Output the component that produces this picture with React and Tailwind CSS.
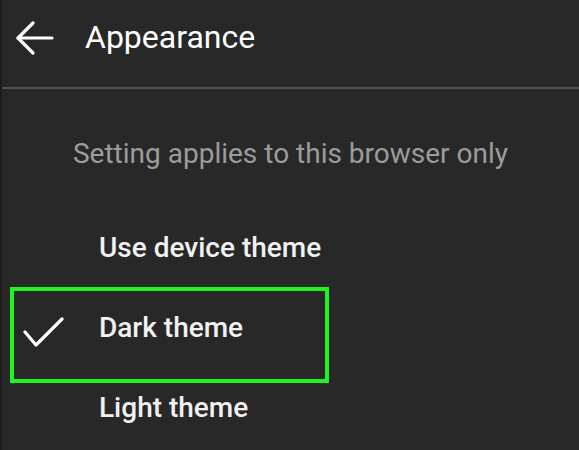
import React from "react";

function BackArrow() {
  return (
    <svg width="40" height="36" viewBox="0 0 40 36" fill="none" stroke="#ffffff" strokeWidth="3.2" strokeLinecap="round" strokeLinejoin="round">
      <path d="M3 18 H37" />
      <path d="M18 3 L3 18 L18 33" />
    </svg>
  );
}

function Check() {
  return (
    <svg width="42" height="32" viewBox="0 0 42 32" fill="none" stroke="#ffffff" strokeWidth="3.2" strokeLinecap="round" strokeLinejoin="round">
      <path d="M2 15 L13 28 L39 2" />
    </svg>
  );
}

export default function App() {
  const rows = [
    { label: "Use device theme", checked: false },
    { label: "Dark theme", checked: true },
    { label: "Light theme", checked: false },
  ];
  return (
    <div className="relative w-[579px] h-[450px] overflow-hidden bg-[#282828] border-l-2 border-[#1c1c1c] font-['Roboto',sans-serif]">
      <div className="flex h-[87px] items-center pb-[13px]">
        <div className="ml-[13px] mt-[2px] flex w-[40px]">
          <BackArrow />
        </div>
        <div className="ml-[30px] text-[32px] leading-none text-white">Appearance</div>
      </div>
      <div className="h-[2px] bg-[#4f4f4f]" />
      <div className="flex h-[119px] items-center justify-center pt-[11px]">
        <div className="text-[28px] leading-none text-[#9c9c9c]">Setting applies to this browser only</div>
      </div>
      {rows.map((r) => (
        <div key={r.label} className="flex h-[80px] items-center">
          <div className="flex w-[97px] pl-[21px] pt-[10px]">{r.checked && <Check />}</div>
          <div className="text-[28px] font-medium leading-none text-[#f1f1f1]">{r.label}</div>
        </div>
      ))}
      <div className="pointer-events-none absolute left-[8px] top-[287px] h-[96px] w-[319px] border-4 border-[#1ef51e]" />
    </div>
  );
}
